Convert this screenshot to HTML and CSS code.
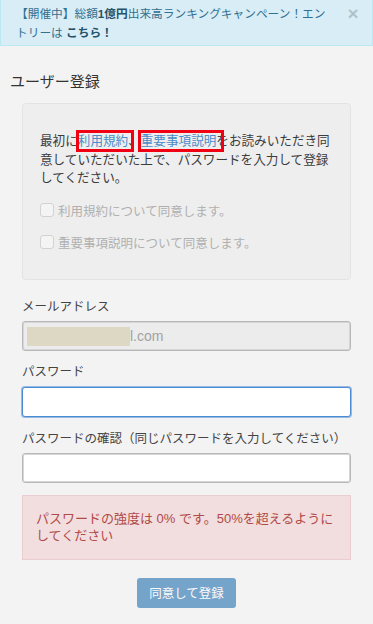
FILE: index.html
```html
<!DOCTYPE html>
<html lang="ja">
<head>
    <meta charset="UTF-8">
    <meta name="viewport" content="width=device-width, initial-scale=1.0">
    <title>ユーザー登録</title>
    <link rel="stylesheet" href="styles.css">
</head>
<body>

<div class="notice">
    <p class="notice-text">【開催中】総額<b>1億円</b>出来高ランキングキャンペーン！エントリーは <b>こちら！</b></p>
    <span class="close">×</span>
</div>

<div class="page">
    <h1 class="title">ユーザー登録</h1>

    <form class="form">
        <div class="well">
            <p class="lead">最初に<a class="link mark mark-1">利用規約</a>、<a class="link mark mark-2">重要事項説明</a>をお読みいただき同意していただいた上で、パスワードを入力して登録してください。</p>
            <label class="check"><span class="box"></span>利用規約について同意します。</label>
            <label class="check"><span class="box"></span>重要事項説明について同意します。</label>
        </div>

        <div class="field">
            <label class="label">メールアドレス</label>
            <div class="input is-disabled"><span class="redact"></span>l.com</div>
        </div>

        <div class="field field-pw">
            <label class="label">パスワード</label>
            <input type="password" class="input is-focus">
        </div>

        <div class="field field-confirm">
            <label class="label">パスワードの確認（同じパスワードを入力してください）</label>
            <input type="password" class="input">
        </div>

        <div class="alert">パスワードの強度は 0% です。50%を超えるようにしてください</div>

        <div class="actions">
            <button type="button" class="submit" disabled>同意して登録</button>
        </div>
    </form>
</div>

</body>
</html>
```

FILE: styles.css
```css
body {
    margin: 0;
    background-color: #f3f3f3;
    font-family: "Liberation Sans", "Noto Sans CJK JP", sans-serif;
    font-size: 12.5px;
    color: #333;
}
.notice {
    display: flex;
    align-items: flex-start;
    padding: 5px 9px 3px 15px;
    background-color: #d9edf7;
    border: 1px solid #bce8f1;
    border-top: none;
    color: #31708f;
}
.notice-text {
    flex: 1;
    margin: 0;
    font-size: 11.7px;
    line-height: 18.7px;
}
.notice-text b {
    color: #245269;
}
.close {
    width: 20px;
    margin-left: 10px;
    text-align: center;
    font-size: 19px;
    font-weight: bold;
    line-height: 18px;
    color: #000;
    opacity: 0.18;
}
.page {
    padding: 0 10px;
}
.title {
    margin: 26px 0 11px;
    font-size: 15px;
    font-weight: normal;
    line-height: 20px;
    color: #333;
}
.form {
    padding: 0 12px;
}
.well {
    padding: 28px 17px 27px;
    background-color: #eee;
    border: 1px solid #e3e3e3;
    border-radius: 4px;
}
.lead {
    margin: 0 0 13px;
    line-height: 18.2px;
    color: #3c3c3c;
    font-size: 12.6px;
}
.link {
    color: #4a8bc9;
}
.mark {
    position: relative;
}
.mark::after {
    content: "";
    position: absolute;
    top: -4px;
    bottom: -4px;
    border: 3px solid #f00012;
}
.mark-1::after {
    left: -2px;
    right: -6px;
}
.mark-2::after {
    left: -3px;
    right: -8px;
}
.check {
    display: flex;
    align-items: center;
    gap: 4px;
    height: 20px;
    color: #b0b0b0;
}
.check + .check {
    margin-top: 12px;
}
.box {
    width: 12px;
    height: 12px;
    background-color: #f4f4f4;
    border: 1px solid #d2d2d2;
    border-radius: 3px;
}
.field {
    margin-top: 18px;
}
.field-pw {
    margin-top: 12px;
}
.field-confirm {
    margin-top: 13px;
}
.label {
    display: block;
    line-height: 18px;
    color: #444;
}
.input {
    display: block;
    box-sizing: border-box;
    width: 100%;
    height: 30px;
    margin: 5px 0 0;
    padding: 0 4px;
    background-color: #fff;
    border: 1px solid #b8b8b8;
    border-radius: 3px;
    box-shadow: inset 0 0 0 1px #d6d6d6;
    outline: none;
}
.field-pw .input {
    margin-top: 6px;
}
.is-disabled {
    display: flex;
    align-items: center;
    background-color: #ececec;
    font-size: 14px;
    color: #a2a2a2;
}
.redact {
    width: 103px;
    height: 19px;
    background-color: #ddd8c3;
}
.is-focus {
    border-color: #4a8bd4;
    box-shadow: 0 0 0 1px rgba(74, 139, 212, 0.55);
}
.alert {
    margin-top: 12px;
    padding: 14px 13px 14px 13px;
    font-size: 13px;
    line-height: 17.3px;
    background-color: #f2dede;
    border: 1px solid #ebccd1;
    color: #b04a48;
}
.actions {
    margin-top: 18px;
    text-align: center;
}
.submit {
    height: 30px;
    padding: 0 12px;
    background-color: #337ab7;
    border: none;
    border-radius: 3px;
    color: #fff;
    font-family: inherit;
    font-size: 12.5px;
    opacity: 0.65;
}
```
